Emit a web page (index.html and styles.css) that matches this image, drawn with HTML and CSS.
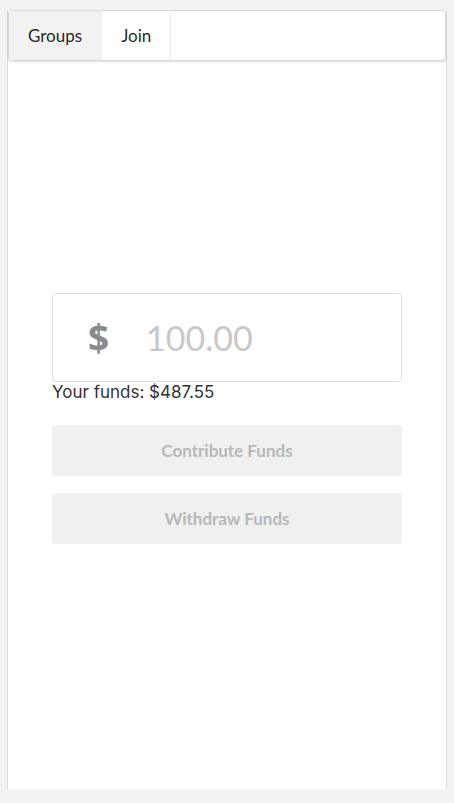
FILE: index.html
```html
<!DOCTYPE html>
<html>
<head>
<meta charset="utf-8">
<link rel="stylesheet" href="styles.css">
</head>
<body>
<div class="page">
  <div class="menu">
    <div class="tab active">Groups</div>
    <div class="tab">Join</div>
  </div>
  <div class="content">
    <div class="amount">
      <span class="dollar">$</span>
      <span class="placeholder">100.00</span>
    </div>
    <div class="funds">Your funds: $487.55</div>
    <button class="btn">Contribute Funds</button>
    <button class="btn">Withdraw Funds</button>
  </div>
</div>
</body>
</html>
```
FILE: styles.css
```css
html, body {
  margin: 0;
  padding: 0;
  background: #f3f3f3;
  height: 100%;
}
body {
  font-family: Lato, "Helvetica Neue", Arial, sans-serif;
}
.page {
  box-sizing: border-box;
  margin: 10px 7px 0 7px;
  height: 779px;
  background: #fff;
  border-left: 1px solid #dcdcdc;
  border-right: 1px solid #dcdcdc;
  display: flex;
  flex-direction: column;
}
.menu {
  box-sizing: border-box;
  display: flex;
  height: 51px;
  border: 1px solid #d9d9da;
  border-radius: 4px;
  box-shadow: 0 1px 2px 0 rgba(34,36,38,.15);
  background: #fff;
  overflow: hidden;
}
.tab {
  display: flex;
  align-items: center;
  padding: 0 19px;
  font-size: 17px;
  color: rgba(0,0,0,.87);
  border-right: 1px solid #ededed;
}
.tab.active {
  background: #f2f2f2;
}
.content {
  padding: 232px 44px 0 44px;
  display: flex;
  flex-direction: column;
}
.amount {
  box-sizing: border-box;
  height: 89px;
  border: 1px solid #dedede;
  border-radius: 4px;
  display: flex;
  align-items: center;
  padding-left: 35px;
}
.dollar {
  font-family: "Open Sans", Lato, sans-serif;
  font-weight: 700;
  font-size: 37px;
  color: #8a8a8a;
  width: 58px;
}
.placeholder {
  font-size: 34px;
  color: #c8c8c8;
}
.funds {
  font-family: Inter, "Open Sans", sans-serif;
  font-size: 17px;
  color: #333;
  line-height: 20px;
}
.btn {
  font-family: Lato, sans-serif;
  font-weight: 700;
  font-size: 17px;
  color: #b7b8b9;
  background: #eff0f0;
  border: none;
  border-radius: 4px;
  height: 51px;
  margin-top: 23px;
  padding: 0;
}
.btn + .btn {
  margin-top: 17px;
}
```
